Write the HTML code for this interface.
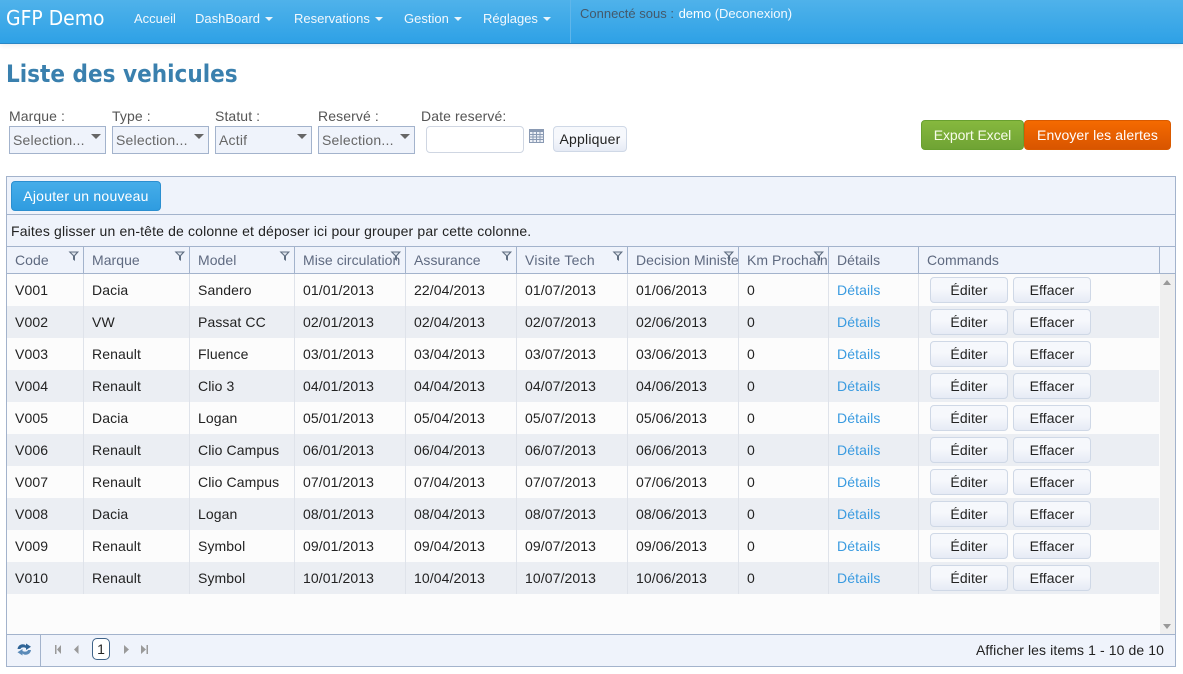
<!DOCTYPE html>
<html lang="fr"><head><meta charset="utf-8"><title>Liste des vehicules</title>
<style>
*{box-sizing:border-box}
html,body{margin:0;padding:0;width:1183px;height:674px;overflow:hidden;background:#fff;font-family:"Liberation Sans",Arial,sans-serif;font-size:14px;color:#222}
.a{position:absolute;white-space:nowrap}
#nav{left:0;top:0;width:1183px;height:44px;background:linear-gradient(#4fb2ea,#2ea1e6);border-bottom:1px solid #2a86c4;box-shadow:0 2px 5px rgba(0,0,0,.07)}
.n{top:11px;color:#f2f8fd;font-size:13px;line-height:16px}
.n i{display:inline-block;width:0;height:0;border-left:4px solid transparent;border-right:4px solid transparent;border-top:4px solid #eaf5fc;margin-left:5px;vertical-align:2px}
.lbl{top:108px;color:#555;font-size:14px;line-height:16px;letter-spacing:.1px}
.sel{top:126px;height:28px;width:97px;background:#eff3fb;border:1px solid #a3b3cc;color:#666;font-size:14px;line-height:27px;padding-left:3px;overflow:hidden;letter-spacing:.2px}
.sel:after{content:"";position:absolute;right:4px;top:7px;border-left:5px solid transparent;border-right:5px solid transparent;border-top:5px solid #666}
.bt{background:linear-gradient(#f6f8fc,#f6f8fc 45%,#e6ebf5);border:1px solid #cfd8e6;border-radius:4px;text-align:center;color:#222}
#grid{left:6px;top:176px;width:1170px;height:491px;border:1px solid #a3b3cc;background:#fcfcfc}
.bar{left:0;width:1168px;background:#eff3fb;border-bottom:1px solid #a3b3cc}
.v{width:1px}
.h{top:75px;color:#5f6a80;line-height:16px;font-size:14px;letter-spacing:.05px}
table{position:absolute;left:0;top:97px;width:1152px;border-collapse:separate;border-spacing:0;table-layout:fixed}
td{height:32px;padding:0 0 0 8px;border-right:1px solid #dfe3ea;font-size:14px;color:#222;white-space:nowrap;overflow:hidden;letter-spacing:.1px}
tr:nth-child(even) td{background:#ebeef3}
td a{color:#3a9be0;text-decoration:none}
td b{font-weight:400;display:inline-block;width:78px;height:26px;line-height:24px;margin:0 5px 0 3px;vertical-align:middle;background:linear-gradient(#f6f8fc,#f6f8fc 45%,#e6ebf5);border:1px solid #cfd8e6;border-radius:4px;text-align:center;color:#222}
td b+b{margin-left:0}
.f{position:absolute;top:74px}
</style></head><body>
<div class="a" id="nav"></div>
<div class="a" style="left:570px;top:0;width:1px;height:43px;background:#5fb6ea"></div>
<div class="a" style="left:6px;top:6px;color:#fff;font:20px/24px 'DejaVu Sans',sans-serif;transform-origin:0 0;transform:scaleX(.94)">GFP Demo</div>
<div class="a n" style="left:134px">Accueil</div>
<div class="a n" style="left:195px">DashBoard<i></i></div>
<div class="a n" style="left:294px">Reservations<i></i></div>
<div class="a n" style="left:404px">Gestion<i></i></div>
<div class="a n" style="left:483px">Réglages<i></i></div>
<div class="a" style="left:580px;top:6px;font-size:13px;line-height:16px;color:#44596b">Connecté sous : <span style="color:#fff;margin-left:1px">demo</span> <span style="color:#f2f9ff">(Deconexion)</span></div>

<div class="a" style="left:6px;top:58px;color:#3a80ae;font:bold 24px/32px 'DejaVu Sans',sans-serif;transform-origin:0 0;transform:scaleX(.9)">Liste des vehicules</div>

<div class="a lbl" style="left:9px">Marque :</div>
<div class="a lbl" style="left:112px">Type :</div>
<div class="a lbl" style="left:215px">Statut :</div>
<div class="a lbl" style="left:318px">Reservé :</div>
<div class="a lbl" style="left:421px">Date reservé:</div>
<div class="a sel" style="left:9px">Selection...</div>
<div class="a sel" style="left:112px">Selection...</div>
<div class="a sel" style="left:215px">Actif</div>
<div class="a sel" style="left:318px">Selection...</div>
<div class="a" style="left:426px;top:126px;width:98px;height:27px;background:#fff;border:1px solid #cfd6e2;border-radius:4px"></div>
<svg class="a" style="left:529px;top:129px" width="16" height="15" viewBox="0 0 16 15"><rect x=".5" y=".5" width="14" height="13" fill="#eef1f7" stroke="#8a9ab3"/><rect x="1" y="1" width="13" height="2" fill="#8a9ab3"/><path d="M1 5.500h13M1 8h13M1 10.500h13M4 3v10M7.500 3v10M11 3v10" stroke="#8a9ab3" fill="none"/></svg>
<div class="a bt" style="left:553px;top:126px;width:74px;height:26px;line-height:25px;letter-spacing:.2px">Appliquer</div>
<div class="a" style="left:921px;top:120px;width:103px;height:30px;background:linear-gradient(#86b83e,#6fa334);border:1px solid #69a02f;border-radius:4px;color:#f8fcea;text-align:center;line-height:28px;letter-spacing:-.1px">Export Excel</div>
<div class="a" style="left:1024px;top:120px;width:147px;height:30px;background:linear-gradient(#f56a00,#d95500);border:1px solid #d95a00;border-radius:4px;color:#fff;text-align:center;line-height:28px;letter-spacing:.1px">Envoyer les alertes</div>

<div class="a" id="grid">
<div class="a bar" style="top:0;height:38px"></div>
<div class="a" style="left:4px;top:4px;width:150px;height:30px;background:linear-gradient(#45ade9,#2f9ce0);border:1px solid #2b8fd0;border-radius:4px;color:#fff;text-align:center;line-height:28px;letter-spacing:.22px">Ajouter un nouveau</div>
<div class="a bar" style="top:38px;height:32px;line-height:32px;padding-left:4px;color:#222;letter-spacing:.146px">Faites glisser un en-tête de colonne et déposer ici pour grouper par cette colonne.</div>
<div class="a bar" style="top:70px;height:27px"></div>
<div class="a h" style="left:8px">Code</div>
<div class="a h" style="left:85px">Marque</div>
<div class="a h" style="left:191px">Model</div>
<div class="a h" style="left:296px;width:102px;overflow:hidden">Mise circulation</div>
<div class="a h" style="left:407px">Assurance</div>
<div class="a h" style="left:518px;letter-spacing:.25px">Visite Tech</div>
<div class="a h" style="left:629px;width:102px;overflow:hidden">Decision Ministere</div>
<div class="a h" style="left:740px;width:81px;overflow:hidden">Km Prochain</div>
<div class="a h" style="left:830px">Détails</div>
<div class="a h" style="left:920px">Commands</div>
<svg class="f" style="left:61px" width="12" height="11" viewBox="0 0 12 11"><path d="M.5.500h10.500L7 5v5L5 8.500V5z" fill="#5f6d80"/><path d="M3 1.500h5.500L6 4.500z" fill="#dfe5ee"/></svg>
<svg class="f" style="left:167px" width="12" height="11" viewBox="0 0 12 11"><path d="M.5.500h10.500L7 5v5L5 8.500V5z" fill="#5f6d80"/><path d="M3 1.500h5.500L6 4.500z" fill="#dfe5ee"/></svg>
<svg class="f" style="left:272px" width="12" height="11" viewBox="0 0 12 11"><path d="M.5.500h10.500L7 5v5L5 8.500V5z" fill="#5f6d80"/><path d="M3 1.500h5.500L6 4.500z" fill="#dfe5ee"/></svg>
<svg class="f" style="left:383px" width="12" height="11" viewBox="0 0 12 11"><path d="M.5.500h10.500L7 5v5L5 8.500V5z" fill="#5f6d80"/><path d="M3 1.500h5.500L6 4.500z" fill="#dfe5ee"/></svg>
<svg class="f" style="left:494px" width="12" height="11" viewBox="0 0 12 11"><path d="M.5.500h10.500L7 5v5L5 8.500V5z" fill="#5f6d80"/><path d="M3 1.500h5.500L6 4.500z" fill="#dfe5ee"/></svg>
<svg class="f" style="left:605px" width="12" height="11" viewBox="0 0 12 11"><path d="M.5.500h10.500L7 5v5L5 8.500V5z" fill="#5f6d80"/><path d="M3 1.500h5.500L6 4.500z" fill="#dfe5ee"/></svg>
<svg class="f" style="left:716px" width="12" height="11" viewBox="0 0 12 11"><path d="M.5.500h10.500L7 5v5L5 8.500V5z" fill="#5f6d80"/><path d="M3 1.500h5.500L6 4.500z" fill="#dfe5ee"/></svg>
<svg class="f" style="left:806px" width="12" height="11" viewBox="0 0 12 11"><path d="M.5.500h10.500L7 5v5L5 8.500V5z" fill="#5f6d80"/><path d="M3 1.500h5.500L6 4.500z" fill="#dfe5ee"/></svg>
<div class="a v" style="left:76px;top:70px;height:27px;background:#a3b3cc"></div>
<div class="a v" style="left:182px;top:70px;height:27px;background:#a3b3cc"></div>
<div class="a v" style="left:287px;top:70px;height:27px;background:#a3b3cc"></div>
<div class="a v" style="left:398px;top:70px;height:27px;background:#a3b3cc"></div>
<div class="a v" style="left:509px;top:70px;height:27px;background:#a3b3cc"></div>
<div class="a v" style="left:620px;top:70px;height:27px;background:#a3b3cc"></div>
<div class="a v" style="left:731px;top:70px;height:27px;background:#a3b3cc"></div>
<div class="a v" style="left:821px;top:70px;height:27px;background:#a3b3cc"></div>
<div class="a v" style="left:911px;top:70px;height:27px;background:#a3b3cc"></div>
<div class="a v" style="left:1152px;top:70px;height:27px;background:#a3b3cc"></div>
<table><colgroup><col style="width:77px"><col style="width:106px"><col style="width:105px"><col style="width:111px"><col style="width:111px"><col style="width:111px"><col style="width:111px"><col style="width:90px"><col style="width:90px"><col></colgroup>
<tr><td>V001</td><td>Dacia</td><td>Sandero</td><td>01/01/2013</td><td>22/04/2013</td><td>01/07/2013</td><td>01/06/2013</td><td>0</td><td><a>Détails</a></td><td style="border:0"><b>Éditer</b><b>Effacer</b></td></tr>
<tr><td>V002</td><td>VW</td><td>Passat CC</td><td>02/01/2013</td><td>02/04/2013</td><td>02/07/2013</td><td>02/06/2013</td><td>0</td><td><a>Détails</a></td><td style="border:0"><b>Éditer</b><b>Effacer</b></td></tr>
<tr><td>V003</td><td>Renault</td><td>Fluence</td><td>03/01/2013</td><td>03/04/2013</td><td>03/07/2013</td><td>03/06/2013</td><td>0</td><td><a>Détails</a></td><td style="border:0"><b>Éditer</b><b>Effacer</b></td></tr>
<tr><td>V004</td><td>Renault</td><td>Clio 3</td><td>04/01/2013</td><td>04/04/2013</td><td>04/07/2013</td><td>04/06/2013</td><td>0</td><td><a>Détails</a></td><td style="border:0"><b>Éditer</b><b>Effacer</b></td></tr>
<tr><td>V005</td><td>Dacia</td><td>Logan</td><td>05/01/2013</td><td>05/04/2013</td><td>05/07/2013</td><td>05/06/2013</td><td>0</td><td><a>Détails</a></td><td style="border:0"><b>Éditer</b><b>Effacer</b></td></tr>
<tr><td>V006</td><td>Renault</td><td>Clio Campus</td><td>06/01/2013</td><td>06/04/2013</td><td>06/07/2013</td><td>06/06/2013</td><td>0</td><td><a>Détails</a></td><td style="border:0"><b>Éditer</b><b>Effacer</b></td></tr>
<tr><td>V007</td><td>Renault</td><td>Clio Campus</td><td>07/01/2013</td><td>07/04/2013</td><td>07/07/2013</td><td>07/06/2013</td><td>0</td><td><a>Détails</a></td><td style="border:0"><b>Éditer</b><b>Effacer</b></td></tr>
<tr><td>V008</td><td>Dacia</td><td>Logan</td><td>08/01/2013</td><td>08/04/2013</td><td>08/07/2013</td><td>08/06/2013</td><td>0</td><td><a>Détails</a></td><td style="border:0"><b>Éditer</b><b>Effacer</b></td></tr>
<tr><td>V009</td><td>Renault</td><td>Symbol</td><td>09/01/2013</td><td>09/04/2013</td><td>09/07/2013</td><td>09/06/2013</td><td>0</td><td><a>Détails</a></td><td style="border:0"><b>Éditer</b><b>Effacer</b></td></tr>
<tr><td>V010</td><td>Renault</td><td>Symbol</td><td>10/01/2013</td><td>10/04/2013</td><td>10/07/2013</td><td>10/06/2013</td><td>0</td><td><a>Détails</a></td><td style="border:0"><b>Éditer</b><b>Effacer</b></td></tr>
</table>
<div class="a" style="left:1153px;top:97px;width:15px;height:360px;background:#efefef"></div>
<div class="a" style="left:1156px;top:103px;border-left:4px solid transparent;border-right:4px solid transparent;border-bottom:5px solid #999"></div>
<div class="a" style="left:1156px;top:447px;border-left:4px solid transparent;border-right:4px solid transparent;border-top:5px solid #999"></div>
<div class="a" style="left:0;top:457px;width:1168px;height:32px;background:#eff3fb;border-top:1px solid #a3b3cc"></div>
<div class="a v" style="left:33px;top:457px;height:32px;background:#a3b3cc"></div>
<svg class="a" style="left:10px;top:465px" width="15" height="15" viewBox="0 0 15 15"><path d="M.5 7C1 3.500 4 1.500 7.500 2.500L9 3.500V1.500L14 4.800 9 8V6C7 5 4 5 3.500 7z" fill="#2f6497"/><path d="M14 8C13.500 11.500 10.500 13.500 7 12.500L5.500 11.500V13.500L.5 10.200 5.500 7V9C7.500 10 10.500 10 11 8z" fill="#5a8ab8"/></svg>
<svg class="a" style="left:47px;top:468px" width="100" height="10" viewBox="0 0 100 10"><path d="M1 0h1.500v9H1zM7 0v9L3 4.500zM24.500 0v9L20 4.500zM70 0v9L75 4.500zM87 0v9L92 4.500zM92.500 0H94v9h-1.500z" fill="#9a9a9a"/></svg>
<div class="a" style="left:85px;top:461px;width:18px;height:22px;background:#fff;border:1px solid #3f6388;border-radius:5px;text-align:center;line-height:20px;color:#222">1</div>
<div class="a" style="right:11px;top:465px;line-height:16px;color:#222;letter-spacing:.1px">Afficher les items 1 - 10 de 10</div>
</div>
</body></html>
